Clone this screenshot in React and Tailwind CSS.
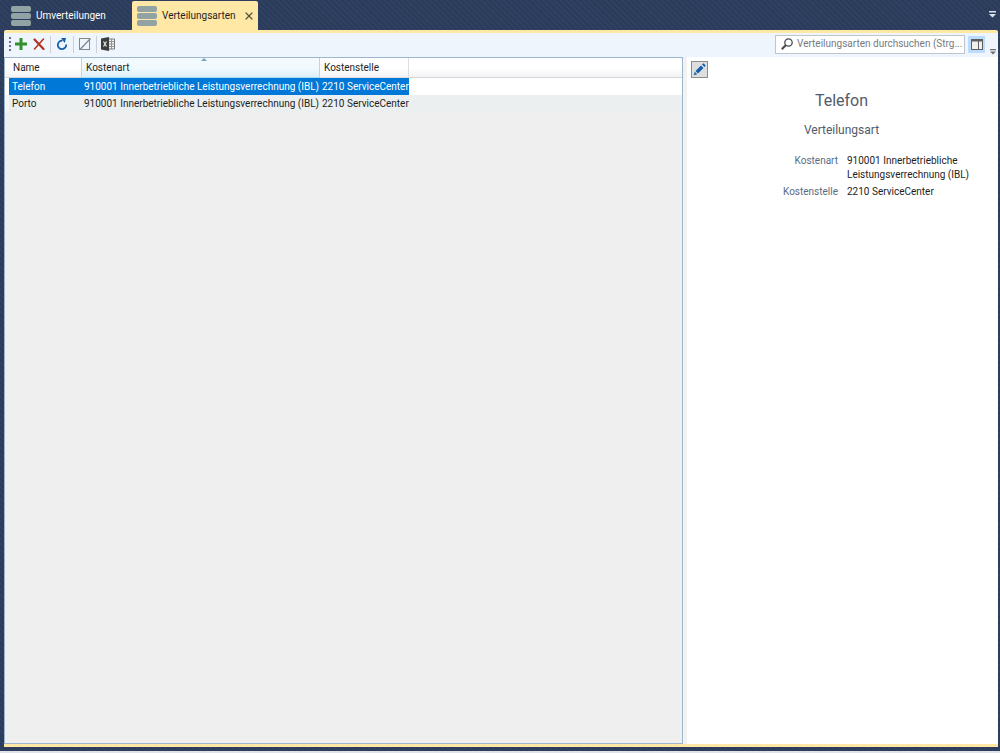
import { X } from 'lucide-react'

const ROWS = [
  { name: 'Telefon', kostenart: '910001 Innerbetriebliche Leistungsverrechnung (IBL)', kostenstelle: '2210 ServiceCenter' },
  { name: 'Porto', kostenart: '910001 Innerbetriebliche Leistungsverrechnung (IBL)', kostenstelle: '2210 ServiceCenter' },
]

function ListIcon() {
  return (
    <svg width="20" height="20" viewBox="0 0 20 20" fill="#91a3a4" className="shrink-0">
      <rect width="20" height="6" rx="2" />
      <rect y="7" width="20" height="6" rx="2" />
      <rect y="14" width="20" height="6" rx="2" />
    </svg>
  )
}

function OverflowIcon({ className }) {
  return (
    <svg width="7" height="7" viewBox="0 0 7 7" fill="currentColor" className={className}>
      <path d="M0 0h7v1.5H0zM0 3h7L3.5 6.5z" />
    </svg>
  )
}

function ToolButton({ label, children }) {
  return (
    <button type="button" aria-label={label} className="flex h-5 w-[18px] items-center justify-center">
      {children}
    </button>
  )
}

function Divider() {
  return <div className="mx-[2px] h-[17px] w-px bg-[#cbd0d8]" />
}

function Tabs() {
  return (
    <header className="flex h-[30px] shrink-0 items-end pr-1 pl-[5px]">
      <button type="button" className="flex h-[29px] w-[127px] items-center gap-[5px] pl-[6px] text-white">
        <ListIcon />
        Umverteilungen
      </button>
      <div className="flex h-[29px] w-[126px] items-center rounded-t-xs bg-[#ffe8a6] pl-[5px]">
        <button type="button" className="flex flex-1 items-center gap-[5px]">
          <ListIcon />
          Verteilungsarten
        </button>
        <button type="button" aria-label="Tab schließen" className="mr-[3px] text-[#5a5340]">
          <X size={12} strokeWidth={2.5} />
        </button>
      </div>
      <button type="button" aria-label="Weitere Tabs" className="mb-3 ml-auto text-[#dce2ee]">
        <OverflowIcon />
      </button>
    </header>
  )
}

function Toolbar() {
  return (
    <div className="flex h-6 shrink-0 items-center bg-[#eef5fd] pb-[2px] pl-[5px]">
      <svg width="2" height="15" viewBox="0 0 2 15" fill="#6d7480" className="mr-[1px]">
        <path d="M0 0h2v2H0zM0 4h2v2H0zM0 8h2v2H0zM0 12h2v2H0z" />
      </svg>
      <ToolButton label="Neu">
        <svg width="12" height="12" viewBox="0 0 12 12" fill="#34902f">
          <path d="M4.500 0h3v4.500H12v3H7.500V12h-3V7.500H0v-3h4.500z" />
        </svg>
      </ToolButton>
      <ToolButton label="Löschen">
        <svg width="12" height="12" viewBox="0 0 12 12" fill="none" stroke="#b5301c" strokeLinecap="round">
          <path d="M1.500 1.500L10.500 11" strokeWidth="2.200" />
          <path d="M10.500 1L1.500 11" strokeWidth="1.500" />
        </svg>
      </ToolButton>
      <Divider />
      <ToolButton label="Aktualisieren">
        <svg width="12" height="12" viewBox="0 0 12 12">
          <path d="M6.500 2.700A4.200 4.200 0 1 0 10.200 6.500" fill="none" stroke="#155fa8" strokeWidth="1.800" />
          <path d="M5 0h5L8.800 5z" fill="#155fa8" />
        </svg>
      </ToolButton>
      <Divider />
      <ToolButton label="Auswahl aufheben">
        <svg width="12" height="12" viewBox="0 0 12 12" fill="none" stroke="#858789">
          <rect x=".5" y=".5" width="10" height="11" />
          <path d="M1 11.500L11.500 .5" strokeWidth="1.300" />
        </svg>
      </ToolButton>
      <Divider />
      <ToolButton label="Excel-Export">
        <svg width="14" height="14" viewBox="0 0 14 14">
          <path d="M7 2h6.500v10H7z" fill="#f4f5f6" stroke="#77797c" />
          <path d="M8 4.500h5M8 7h5M8 9.500h5M10.500 2v10" stroke="#909294" />
          <path d="M0 1.500L8 0v14L0 12.500z" fill="#3b3c3e" />
          <path d="M2.500 4.500l3 5M5.500 4.500l-3 5" stroke="#e8e8e8" strokeWidth="1.200" />
        </svg>
      </ToolButton>

      <label className="ml-auto flex h-[19px] w-[190px] items-center border border-[#bfc5ce] bg-white pl-[5px]">
        <svg width="12" height="12" viewBox="0 0 12 12" fill="none" stroke="#4a4b4d" className="shrink-0">
          <circle cx="7.500" cy="4.500" r="3.700" strokeWidth="1.300" />
          <path d="M5 7L.8 11.200" strokeWidth="2" />
        </svg>
        <input
          type="text"
          aria-label="Verteilungsarten durchsuchen"
          placeholder="Verteilungsarten durchsuchen (Strg..."
          className="ml-1 w-full min-w-0 outline-none placeholder:text-[#777b80]"
        />
      </label>
      <button type="button" aria-label="Detailbereich" className="ml-[3px] flex h-[17px] w-[17px] items-center justify-center bg-[#bddcfb]">
        <svg width="12" height="11" viewBox="0 0 12 11">
          <rect x=".5" y=".5" width="11" height="10" fill="#f3efea" stroke="#5c5f63" />
          <path d="M0 0h12v2.500H0z" fill="#5c5f63" />
          <path d="M7.500 2v9" stroke="#5c5f63" />
        </svg>
      </button>
      <button type="button" aria-label="Weitere Befehle" className="mr-[2px] ml-[5px] self-end text-[#6b6e73]">
        <OverflowIcon className="h-[6px] w-[6px]" />
      </button>
    </div>
  )
}

function DataGrid() {
  return (
    <section className="min-w-0 border border-[#9db6cf] bg-[#efefef]">
      <table className="w-full table-fixed border-separate border-spacing-0 text-left whitespace-nowrap">
        <colgroup>
          <col className="w-1" />
          <col className="w-[72px]" />
          <col className="w-[239px]" />
          <col className="w-[89px]" />
          <col />
        </colgroup>
        <thead>
          <tr className="h-5 bg-linear-to-b from-white from-50% to-[#f1f2f4]">
            <td className="border-b border-[#d5d5d5]" />
            <th className="border-b border-[#d5d5d5] pl-1 font-normal">Name</th>
            <th className="relative border-x border-b border-[#a8dcf2] bg-linear-to-b from-[#f2fafd] from-50% to-[#dcf0f9] pl-1 font-normal" aria-sort="ascending">
              <svg width="6" height="3" viewBox="0 0 6 3" fill="#7ba3bc" className="absolute top-0 left-1/2">
                <path d="M3 0l3 3H0z" />
              </svg>
              Kostenart
            </th>
            <th className="border-r border-b border-[#dedede] pl-1 font-normal">Kostenstelle</th>
            <td className="border-b border-[#d5d5d5]" />
          </tr>
        </thead>
        <tbody>
          {ROWS.map((row, i) => {
            const selected = i === 0
            return (
              <tr key={row.name} aria-selected={selected} className={`h-[17px] ${selected ? 'bg-[#0078d7] text-white' : 'bg-[#ebefef]'}`}>
                <td className={selected ? 'bg-white' : 'bg-[#f5f7f7]'} />
                <td className="pl-[3px]">{row.name}</td>
                <td className="pl-[3px]">{row.kostenart}</td>
                <td className="pl-[2px]">{row.kostenstelle}</td>
                <td className={selected ? 'bg-white' : ''} />
              </tr>
            )
          })}
        </tbody>
      </table>
    </section>
  )
}

function Details({ row }) {
  return (
    <aside className="min-w-0 border-l-4 border-[#f2f2f2] bg-white pt-1 pr-[6px] pl-1">
      <button type="button" aria-label="Bearbeiten" className="flex h-[17px] w-[17px] items-center justify-center border border-[#8c8c8c] bg-[#dedede]">
        <svg width="13" height="13" viewBox="0 0 13 13" fill="#1260ab">
          <path d="M2.500 8L8 2.500L10.500 5L5 10.500zM1.800 8.800l2.400 2.400L.8 12.200zM9 1.500l1.500-1.200L12.700 2.500 11.500 4z" />
        </svg>
      </button>
      <div className="text-center text-[#505c6b]">
        <h1 className="mt-[11px] text-base leading-6">{row.name}</h1>
        <h2 className="mt-[9px] text-xs leading-4">Verteilungsart</h2>
      </div>
      <dl className="mt-4 grid grid-cols-[147px_1fr] gap-x-[9px] gap-y-[3px]">
        <dt className="text-right text-[#5a6b7f]">Kostenart</dt>
        <dd>{row.kostenart}</dd>
        <dt className="text-right text-[#5a6b7f]">Kostenstelle</dt>
        <dd>{row.kostenstelle}</dd>
      </dl>
    </aside>
  )
}

export default function App() {
  return (
    <div className="flex h-screen flex-col border-b-2 border-[#dfe2e8] bg-[#2d3d5c] bg-[repeating-linear-gradient(45deg,#2b3b5a_0_2px,#2f4060_2px_4px)] font-[Roboto,'Open_Sans',sans-serif] text-[10px] leading-[14px] text-[#1e1e1e]">
      <Tabs />
      <main className="mr-[2px] mb-1 ml-1 flex min-h-0 flex-1 flex-col rounded-t-xs border-t-3 border-b-3 border-[#ffe8a6] bg-white">
        <Toolbar />
        <div className="grid min-h-0 flex-1 grid-cols-[679fr_315fr]">
          <DataGrid />
          <Details row={ROWS[0]} />
        </div>
      </main>
    </div>
  )
}
